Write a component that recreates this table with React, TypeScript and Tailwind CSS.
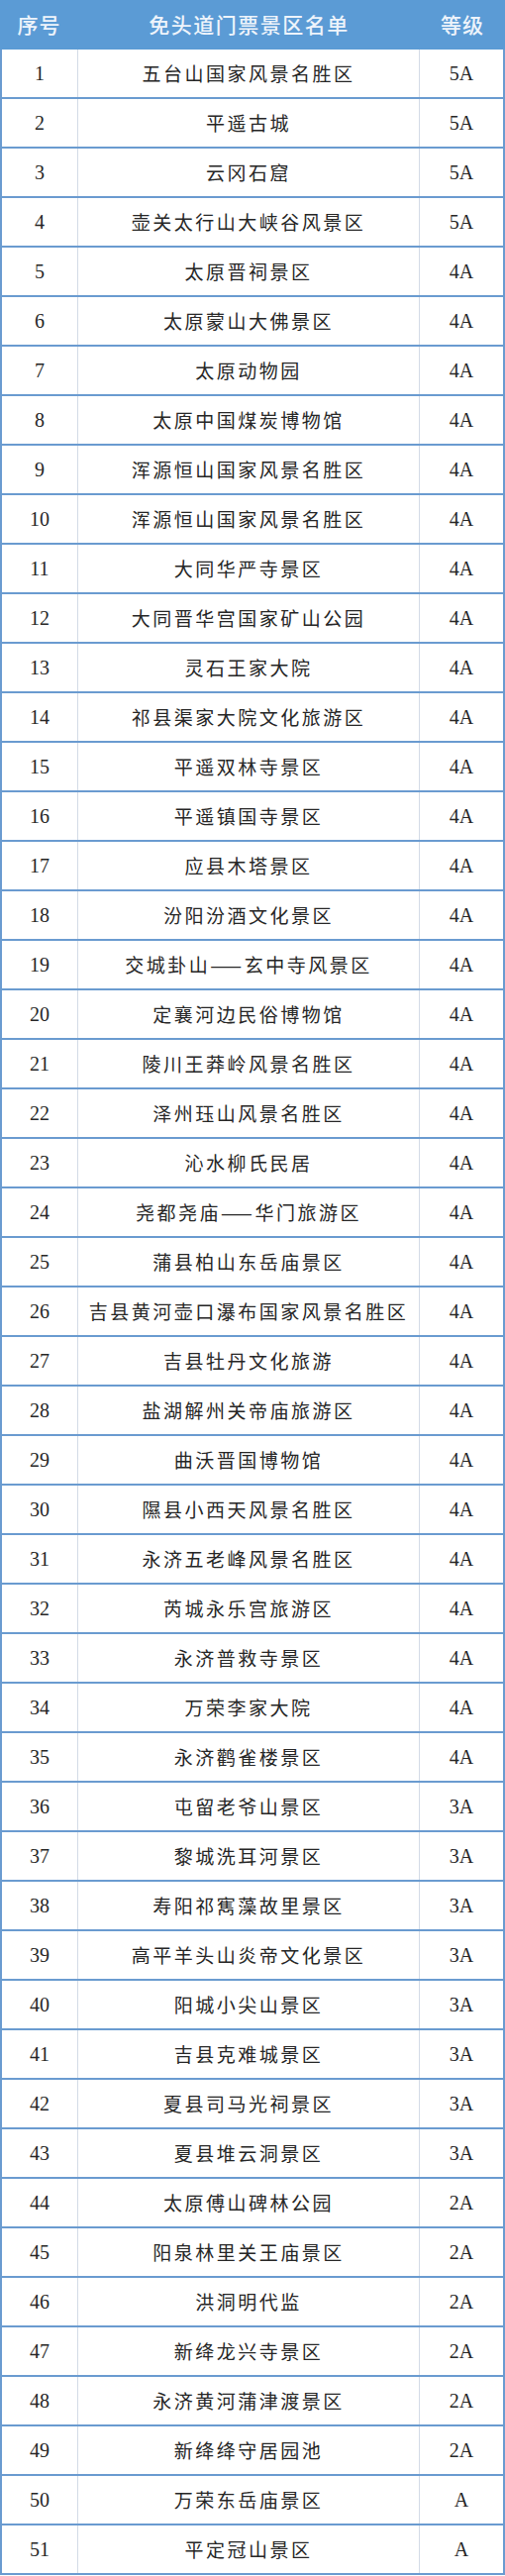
const rows: [string, string][] = [
  ["五台山国家风景名胜区", "5A"],
  ["平遥古城", "5A"],
  ["云冈石窟", "5A"],
  ["壶关太行山大峡谷风景区", "5A"],
  ["太原晋祠景区", "4A"],
  ["太原蒙山大佛景区", "4A"],
  ["太原动物园", "4A"],
  ["太原中国煤炭博物馆", "4A"],
  ["浑源恒山国家风景名胜区", "4A"],
  ["浑源恒山国家风景名胜区", "4A"],
  ["大同华严寺景区", "4A"],
  ["大同晋华宫国家矿山公园", "4A"],
  ["灵石王家大院", "4A"],
  ["祁县渠家大院文化旅游区", "4A"],
  ["平遥双林寺景区", "4A"],
  ["平遥镇国寺景区", "4A"],
  ["应县木塔景区", "4A"],
  ["汾阳汾酒文化景区", "4A"],
  ["交城卦山——玄中寺风景区", "4A"],
  ["定襄河边民俗博物馆", "4A"],
  ["陵川王莽岭风景名胜区", "4A"],
  ["泽州珏山风景名胜区", "4A"],
  ["沁水柳氏民居", "4A"],
  ["尧都尧庙——华门旅游区", "4A"],
  ["蒲县柏山东岳庙景区", "4A"],
  ["吉县黄河壶口瀑布国家风景名胜区", "4A"],
  ["吉县牡丹文化旅游", "4A"],
  ["盐湖解州关帝庙旅游区", "4A"],
  ["曲沃晋国博物馆", "4A"],
  ["隰县小西天风景名胜区", "4A"],
  ["永济五老峰风景名胜区", "4A"],
  ["芮城永乐宫旅游区", "4A"],
  ["永济普救寺景区", "4A"],
  ["万荣李家大院", "4A"],
  ["永济鹳雀楼景区", "4A"],
  ["屯留老爷山景区", "3A"],
  ["黎城洗耳河景区", "3A"],
  ["寿阳祁寯藻故里景区", "3A"],
  ["高平羊头山炎帝文化景区", "3A"],
  ["阳城小尖山景区", "3A"],
  ["吉县克难城景区", "3A"],
  ["夏县司马光祠景区", "3A"],
  ["夏县堆云洞景区", "3A"],
  ["太原傅山碑林公园", "2A"],
  ["阳泉林里关王庙景区", "2A"],
  ["洪洞明代监", "2A"],
  ["新绛龙兴寺景区", "2A"],
  ["永济黄河蒲津渡景区", "2A"],
  ["新绛绛守居园池", "2A"],
  ["万荣东岳庙景区", "A"],
  ["平定冠山景区", "A"],
];

const cjk = { fontFamily: '"Noto Sans CJK SC", sans-serif' };
const num = { fontFamily: '"Liberation Serif", "Noto Sans CJK SC", serif' };

export default function App() {
  return (
    <div className="w-[510px] bg-white">
      <div
        className="grid h-[50px] grid-cols-[79px_345px_1fr] items-center bg-[#5b9bd5] text-[21px] font-medium text-[#eef4fb]"
        style={cjk}
      >
        <div className="text-center tracking-[1px]">序号</div>
        <div className="text-center tracking-[1.5px]">免头道门票景区名单</div>
        <div className="text-center tracking-[1px]">等级</div>
      </div>
      <div className="w-[510px] border-x-2 border-[#6a9bd0]">
        {rows.map(([name, level], i) => (
          <div
            key={i}
            className="grid h-[50px] grid-cols-[77px_345px_1fr] border-b-2 border-[#6a9bd0] text-[#262626]"
          >
            <div className="flex items-center justify-center border-r border-[#d3dbe6] text-[20px]" style={num}>
              {i + 1}
            </div>
            <div
              className="flex items-center justify-center border-r border-[#d3dbe6] text-[19px] tracking-[2.5px]"
              style={cjk}
            >
              {name}
            </div>
            <div className="flex items-center justify-center text-[20px]" style={num}>
              {level}
            </div>
          </div>
        ))}
      </div>
    </div>
  );
}
